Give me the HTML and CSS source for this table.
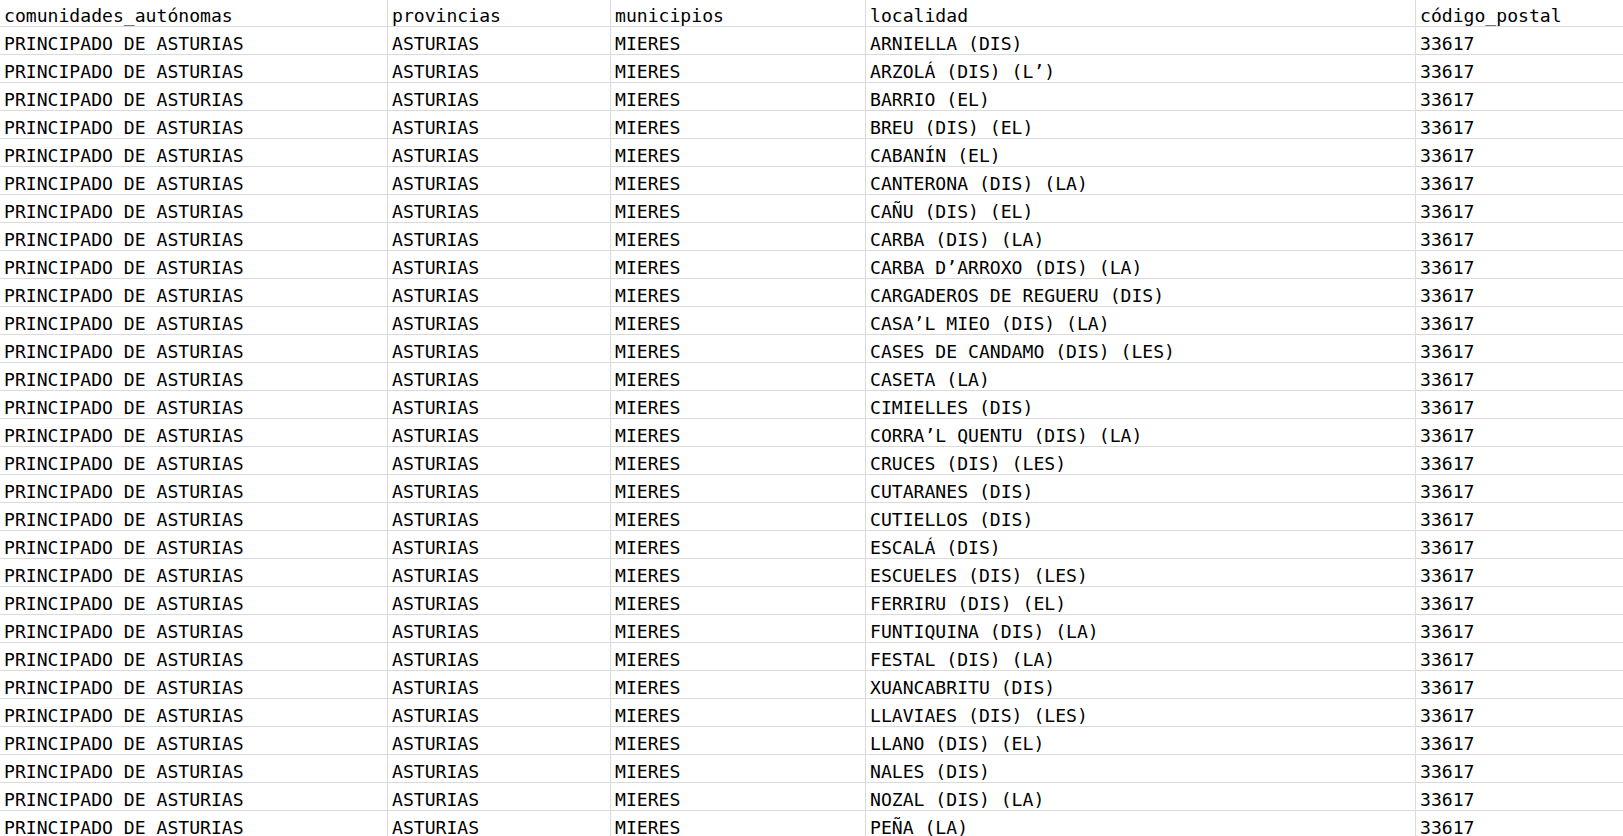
FILE: index.html
```html
<!DOCTYPE html>
<html lang="es">
<head>
<meta charset="utf-8">
<title>códigos postales</title>
<link rel="stylesheet" href="styles.css">
</head>
<body>
<div class="sheet">
  <div class="row head"><div class="c">comunidades_autónomas</div><div class="c">provincias</div><div class="c">municipios</div><div class="c">localidad</div><div class="c">código_postal</div></div>
  <div class="row"><div class="c">PRINCIPADO DE ASTURIAS</div><div class="c">ASTURIAS</div><div class="c">MIERES</div><div class="c">ARNIELLA (DIS)</div><div class="c">33617</div></div>
  <div class="row"><div class="c">PRINCIPADO DE ASTURIAS</div><div class="c">ASTURIAS</div><div class="c">MIERES</div><div class="c">ARZOLÁ (DIS) (L’)</div><div class="c">33617</div></div>
  <div class="row"><div class="c">PRINCIPADO DE ASTURIAS</div><div class="c">ASTURIAS</div><div class="c">MIERES</div><div class="c">BARRIO (EL)</div><div class="c">33617</div></div>
  <div class="row"><div class="c">PRINCIPADO DE ASTURIAS</div><div class="c">ASTURIAS</div><div class="c">MIERES</div><div class="c">BREU (DIS) (EL)</div><div class="c">33617</div></div>
  <div class="row"><div class="c">PRINCIPADO DE ASTURIAS</div><div class="c">ASTURIAS</div><div class="c">MIERES</div><div class="c">CABANÍN (EL)</div><div class="c">33617</div></div>
  <div class="row"><div class="c">PRINCIPADO DE ASTURIAS</div><div class="c">ASTURIAS</div><div class="c">MIERES</div><div class="c">CANTERONA (DIS) (LA)</div><div class="c">33617</div></div>
  <div class="row"><div class="c">PRINCIPADO DE ASTURIAS</div><div class="c">ASTURIAS</div><div class="c">MIERES</div><div class="c">CAÑU (DIS) (EL)</div><div class="c">33617</div></div>
  <div class="row"><div class="c">PRINCIPADO DE ASTURIAS</div><div class="c">ASTURIAS</div><div class="c">MIERES</div><div class="c">CARBA (DIS) (LA)</div><div class="c">33617</div></div>
  <div class="row"><div class="c">PRINCIPADO DE ASTURIAS</div><div class="c">ASTURIAS</div><div class="c">MIERES</div><div class="c">CARBA D’ARROXO (DIS) (LA)</div><div class="c">33617</div></div>
  <div class="row"><div class="c">PRINCIPADO DE ASTURIAS</div><div class="c">ASTURIAS</div><div class="c">MIERES</div><div class="c">CARGADEROS DE REGUERU (DIS)</div><div class="c">33617</div></div>
  <div class="row"><div class="c">PRINCIPADO DE ASTURIAS</div><div class="c">ASTURIAS</div><div class="c">MIERES</div><div class="c">CASA’L MIEO (DIS) (LA)</div><div class="c">33617</div></div>
  <div class="row"><div class="c">PRINCIPADO DE ASTURIAS</div><div class="c">ASTURIAS</div><div class="c">MIERES</div><div class="c">CASES DE CANDAMO (DIS) (LES)</div><div class="c">33617</div></div>
  <div class="row"><div class="c">PRINCIPADO DE ASTURIAS</div><div class="c">ASTURIAS</div><div class="c">MIERES</div><div class="c">CASETA (LA)</div><div class="c">33617</div></div>
  <div class="row"><div class="c">PRINCIPADO DE ASTURIAS</div><div class="c">ASTURIAS</div><div class="c">MIERES</div><div class="c">CIMIELLES (DIS)</div><div class="c">33617</div></div>
  <div class="row"><div class="c">PRINCIPADO DE ASTURIAS</div><div class="c">ASTURIAS</div><div class="c">MIERES</div><div class="c">CORRA’L QUENTU (DIS) (LA)</div><div class="c">33617</div></div>
  <div class="row"><div class="c">PRINCIPADO DE ASTURIAS</div><div class="c">ASTURIAS</div><div class="c">MIERES</div><div class="c">CRUCES (DIS) (LES)</div><div class="c">33617</div></div>
  <div class="row"><div class="c">PRINCIPADO DE ASTURIAS</div><div class="c">ASTURIAS</div><div class="c">MIERES</div><div class="c">CUTARANES (DIS)</div><div class="c">33617</div></div>
  <div class="row"><div class="c">PRINCIPADO DE ASTURIAS</div><div class="c">ASTURIAS</div><div class="c">MIERES</div><div class="c">CUTIELLOS (DIS)</div><div class="c">33617</div></div>
  <div class="row"><div class="c">PRINCIPADO DE ASTURIAS</div><div class="c">ASTURIAS</div><div class="c">MIERES</div><div class="c">ESCALÁ (DIS)</div><div class="c">33617</div></div>
  <div class="row"><div class="c">PRINCIPADO DE ASTURIAS</div><div class="c">ASTURIAS</div><div class="c">MIERES</div><div class="c">ESCUELES (DIS) (LES)</div><div class="c">33617</div></div>
  <div class="row"><div class="c">PRINCIPADO DE ASTURIAS</div><div class="c">ASTURIAS</div><div class="c">MIERES</div><div class="c">FERRIRU (DIS) (EL)</div><div class="c">33617</div></div>
  <div class="row"><div class="c">PRINCIPADO DE ASTURIAS</div><div class="c">ASTURIAS</div><div class="c">MIERES</div><div class="c">FUNTIQUINA (DIS) (LA)</div><div class="c">33617</div></div>
  <div class="row"><div class="c">PRINCIPADO DE ASTURIAS</div><div class="c">ASTURIAS</div><div class="c">MIERES</div><div class="c">FESTAL (DIS) (LA)</div><div class="c">33617</div></div>
  <div class="row"><div class="c">PRINCIPADO DE ASTURIAS</div><div class="c">ASTURIAS</div><div class="c">MIERES</div><div class="c">XUANCABRITU (DIS)</div><div class="c">33617</div></div>
  <div class="row"><div class="c">PRINCIPADO DE ASTURIAS</div><div class="c">ASTURIAS</div><div class="c">MIERES</div><div class="c">LLAVIAES (DIS) (LES)</div><div class="c">33617</div></div>
  <div class="row"><div class="c">PRINCIPADO DE ASTURIAS</div><div class="c">ASTURIAS</div><div class="c">MIERES</div><div class="c">LLANO (DIS) (EL)</div><div class="c">33617</div></div>
  <div class="row"><div class="c">PRINCIPADO DE ASTURIAS</div><div class="c">ASTURIAS</div><div class="c">MIERES</div><div class="c">NALES (DIS)</div><div class="c">33617</div></div>
  <div class="row"><div class="c">PRINCIPADO DE ASTURIAS</div><div class="c">ASTURIAS</div><div class="c">MIERES</div><div class="c">NOZAL (DIS) (LA)</div><div class="c">33617</div></div>
  <div class="row"><div class="c">PRINCIPADO DE ASTURIAS</div><div class="c">ASTURIAS</div><div class="c">MIERES</div><div class="c">PEÑA (LA)</div><div class="c">33617</div></div>
</div>
</body>
</html>
```

FILE: styles.css
```css
html, body {
  margin: 0;
  padding: 0;
  background: #ffffff;
  overflow: hidden;
}

.sheet {
  margin-top: -1px;
  font-family: "DejaVu Sans Mono", "Liberation Mono", monospace;
  font-size: 18.1px;
  color: #000000;
}

.row {
  display: grid;
  grid-template-columns: 388px 223px 255px 550px 1fr;
  height: 28px;
}

.c {
  box-sizing: border-box;
  height: 28px;
  padding: 7px 3px 0 4px;
  line-height: 19px;
  white-space: nowrap;
  overflow: hidden;
  border-right: 1px solid #dadada;
  border-bottom: 1px solid #dadada;
}

.c:last-child {
  border-right: none;
}
```
